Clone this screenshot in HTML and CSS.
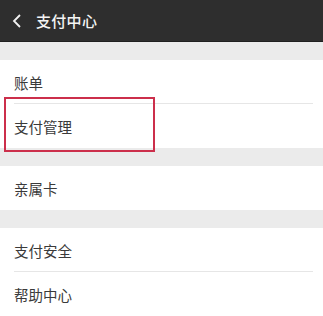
FILE: index.html
```html
<!DOCTYPE html>
<html lang="zh">
<head>
<meta charset="utf-8">
<link rel="stylesheet" href="styles.css">
</head>
<body>
<div class="app">
  <header class="topbar">
    <svg class="back" width="12" height="16" viewBox="0 0 12 16"><path d="M9 2 L3 8 L9 14" fill="none" stroke="#f2f2f2" stroke-width="1.8"/></svg>
    <span class="title">支付中心</span>
  </header>
  <div class="gap"></div>
  <section class="group">
    <div class="item sep"><span>账单</span></div>
    <div class="item"><span>支付管理</span></div>
    <div class="highlight"></div>
  </section>
  <div class="gap"></div>
  <section class="group">
    <div class="item"><span>亲属卡</span></div>
  </section>
  <div class="gap"></div>
  <section class="group">
    <div class="item sep"><span>支付安全</span></div>
    <div class="item"><span>帮助中心</span></div>
  </section>
</div>
</body>
</html>
```

FILE: styles.css
```css
html, body {
  margin: 0;
  padding: 0;
  background: #ebebeb;
}
.app {
  width: 323px;
  height: 316px;
  overflow: hidden;
  font-family: "Noto Sans CJK SC", "Noto Sans", sans-serif;
  background: #ebebeb;
}
.topbar {
  height: 42px;
  background: #2e2e2e;
  display: flex;
  align-items: center;
  border-bottom: 1px solid #1f1f1f;
  box-sizing: border-box;
}
.back {
  margin-left: 11px;
  margin-right: 13px;
}
.title {
  color: #f4f4f4;
  font-size: 15px;
  font-weight: 500;
  letter-spacing: 0.3px;
}
.gap {
  height: 18px;
}
.group {
  background: #fff;
  position: relative;
}
.item {
  height: 44px;
  display: flex;
  align-items: center;
  padding-left: 14px;
  font-size: 14.5px;
  color: #3a3a3a;
  position: relative;
}
.item.sep::after {
  content: "";
  position: absolute;
  left: 14px;
  right: 10px;
  bottom: 0;
  height: 1px;
  background: #e6e6e6;
}
.highlight {
  position: absolute;
  left: 4px;
  top: 37px;
  width: 151px;
  height: 55px;
  border: 2px solid #cc2f4b;
  box-sizing: border-box;
}
```
